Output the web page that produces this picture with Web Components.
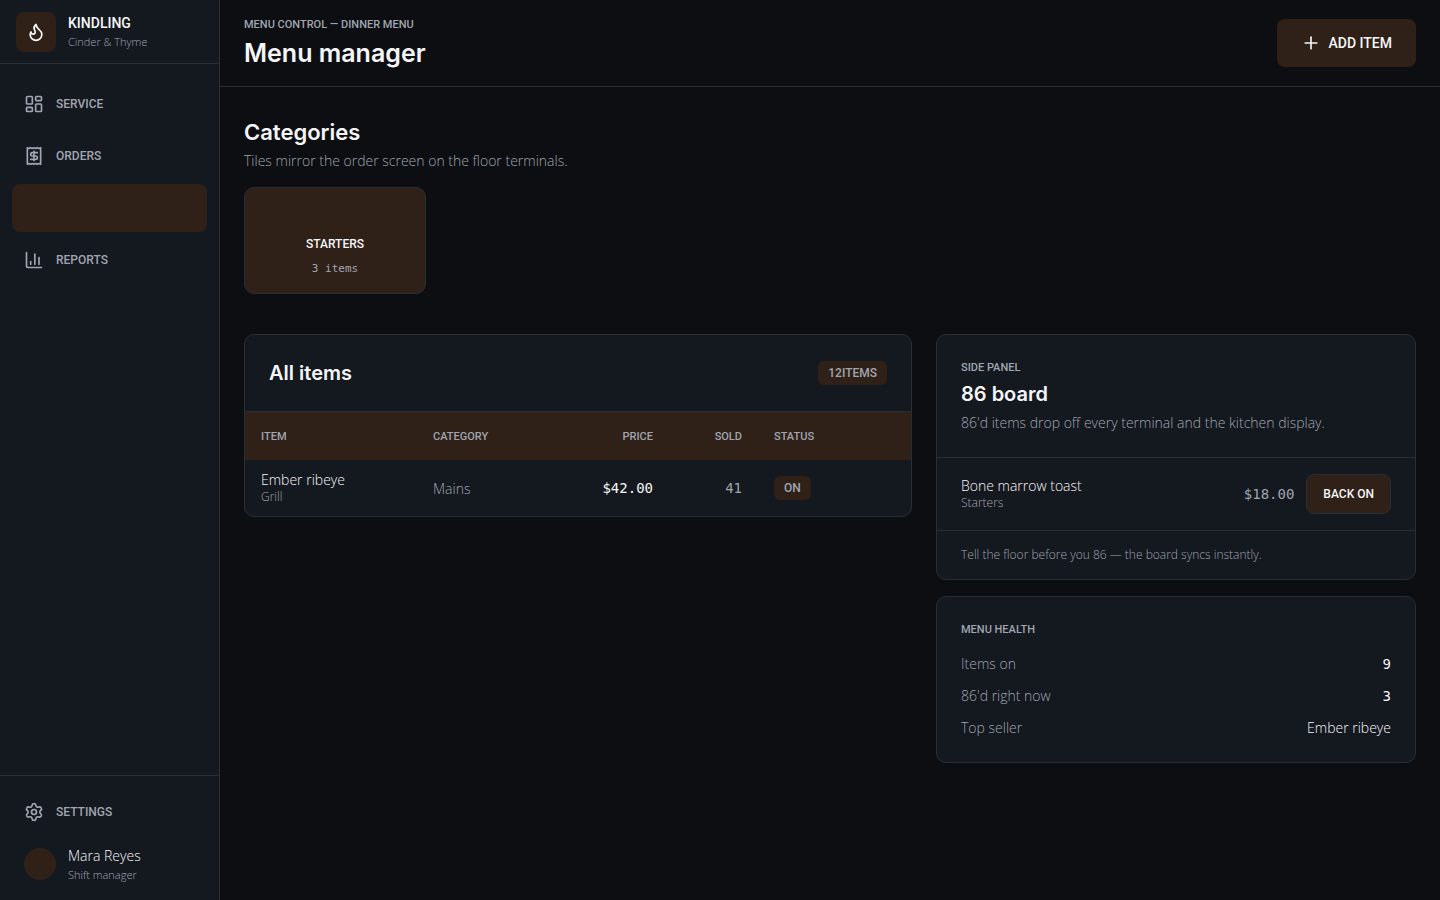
<!DOCTYPE html>
<html lang="en">
<head>
<meta charset="utf-8">
<meta name="viewport" content="width=device-width, initial-scale=1">
<title>Kindling — Menu manager</title>
<style>
  :root {
    --bg: #0c0e12;
    --surface: #14181f;
    --line: #2a2e35;
    --ember: #2f2118;
    --text: #f6f6f8;
    --muted: #a0a5b0;
    --display: Inter, sans-serif;
    --label: Roboto, sans-serif;
    --body: "Open Sans", sans-serif;
    --mono: "DejaVu Sans Mono", monospace;
  }
  body {
    margin: 0;
    background: var(--bg);
    color: var(--text);
    font: 300 14px/21px var(--body);
  }
</style>
</head>
<body>
<menu-app>
  <app-sidebar slot="sidebar">
    <nav-link icon="service">SERVICE</nav-link>
    <nav-link icon="orders">ORDERS</nav-link>
    <nav-link current label="Menu"></nav-link>
    <nav-link icon="reports">REPORTS</nav-link>
    <nav-link slot="foot" icon="settings">SETTINGS</nav-link>
    <user-badge slot="foot"><span>Mara Reyes</span><span slot="role">Shift manager</span></user-badge>
  </app-sidebar>
  <page-header slot="header">
    <span slot="eyebrow">MENU CONTROL — DINNER MENU</span>
    Menu manager
    <add-button slot="action">ADD ITEM</add-button>
  </page-header>
  <category-section>
    <category-tile>STARTERS<span slot="count">3 items</span></category-tile>
  </category-section>
  <content-columns>
    <items-card></items-card>
    <eighty-six-board slot="side"></eighty-six-board>
    <menu-health slot="side"></menu-health>
  </content-columns>
</menu-app>

<script>
const base = `
  *, *::before { box-sizing: border-box; }
  h1, h2, p, dl, dd, dt { margin: 0; }
  h1, h2 { font-family: var(--display); font-weight: 600; }
  .eyebrow { font: 500 11px/17px var(--label); color: var(--muted); }
  button { font: inherit; color: inherit; cursor: pointer; }
  svg { display: block; fill: none; stroke: currentColor; stroke-width: 2; stroke-linecap: round; stroke-linejoin: round; }
`;
const icons = {
  service: '<rect width="7" height="9" x="3" y="3" rx="1"/><rect width="7" height="5" x="14" y="3" rx="1"/><rect width="7" height="9" x="14" y="12" rx="1"/><rect width="7" height="5" x="3" y="16" rx="1"/>',
  orders: '<path d="M4 2v20l2-1 2 1 2-1 2 1 2-1 2 1 2-1 2 1V2l-2 1-2-1-2 1-2-1-2 1-2-1-2 1Z"/><path d="M16 8h-6a2 2 0 1 0 0 4h4a2 2 0 1 1 0 4H8"/><path d="M12 17.5v-11"/>',
  reports: '<path d="M3 3v16a2 2 0 0 0 2 2h16"/><path d="M18 17V9"/><path d="M13 17V5"/><path d="M8 17v-3"/>',
  settings: '<path d="M9.671 4.136a2.34 2.34 0 0 1 4.659 0 2.34 2.34 0 0 0 3.319 1.915 2.34 2.34 0 0 1 2.33 4.033 2.34 2.34 0 0 0 0 3.831 2.34 2.34 0 0 1-2.33 4.033 2.34 2.34 0 0 0-3.319 1.915 2.34 2.34 0 0 1-4.659 0 2.34 2.34 0 0 0-3.32-1.915 2.34 2.34 0 0 1-2.33-4.033 2.34 2.34 0 0 0 0-3.831A2.34 2.34 0 0 1 6.35 6.051a2.34 2.34 0 0 0 3.319-1.915"/><circle cx="12" cy="12" r="3"/>',
  flame: '<path d="M8.5 14.5A2.5 2.5 0 0 0 11 12c0-1.38-.5-2-1-3-1.072-2.143-.224-4.054 2-6 .5 2.5 2 4.9 4 6.5 2 1.6 3 3.5 3 5.5a7 7 0 1 1-14 0c0-1.153.433-2.294 1-3a2.5 2.5 0 0 0 2.5 2.5z"/>',
  plus: '<path d="M5 12h14"/><path d="M12 5v14"/>'
};
const icon = (name, size = 20) =>
  `<svg width="${size}" height="${size}" viewBox="0 0 24 24" aria-hidden="true">${icons[name] || ''}</svg>`;

function define(tag, css, html) {
  customElements.define(tag, class extends HTMLElement {
    constructor() {
      super();
      this.attachShadow({ mode: 'open' });
    }
    connectedCallback() {
      const markup = typeof html === 'function' ? html(this) : html;
      this.shadowRoot.innerHTML = `<style>${base}${css}</style>${markup}`;
    }
  });
}

define('menu-app', `
  :host { display: grid; grid-template-columns: 220px minmax(0, 1fr); min-height: 100vh; }
  .page { display: flex; flex-direction: column; }
  main { display: flex; flex-direction: column; gap: 40px; padding: 32px 24px; }
`, `<slot name="sidebar"></slot>
    <div class="page"><slot name="header"></slot><main><slot></slot></main></div>`);

define('app-sidebar', `
  :host { display: flex; flex-direction: column; background: var(--surface); border-right: 1px solid var(--line); }
  header { display: flex; align-items: center; gap: 12px; height: 64px; padding: 0 16px; border-bottom: 1px solid var(--line); }
  .mark { display: grid; place-items: center; width: 40px; height: 40px; border-radius: 8px; background: var(--ember); }
  .name { font: 500 14px/21px var(--label); }
  .place { font-size: 11px; line-height: 16px; color: var(--muted); }
  nav { flex: 1; display: flex; flex-direction: column; gap: 4px; padding: 16px 12px; }
  footer { display: flex; flex-direction: column; gap: 4px; padding: 12px; border-top: 1px solid var(--line); }
`, `<header>
      <div class="mark">${icon('flame')}</div>
      <div><div class="name">KINDLING</div><div class="place">Cinder &amp; Thyme</div></div>
    </header>
    <nav aria-label="Main"><slot></slot></nav>
    <footer><slot name="foot"></slot></footer>`);

define('nav-link', `
  :host { display: block; }
  a { display: flex; align-items: center; gap: 12px; height: 48px; padding: 0 12px; border-radius: 8px;
      font: 500 12px/16px var(--label); color: var(--muted); text-decoration: none; }
  a[aria-current] { background: var(--ember); }
`, el => el.hasAttribute('current')
  ? `<a href="#" aria-current="page" aria-label="${el.getAttribute('label')}"></a>`
  : `<a href="#">${icon(el.getAttribute('icon'))}<slot></slot></a>`);

define('user-badge', `
  :host { display: flex; align-items: center; gap: 12px; height: 48px; padding: 0 12px; }
  .avatar { width: 32px; height: 32px; border-radius: 50%; background: var(--ember); }
  .who { line-height: 20px; }
  .role { font-size: 11px; line-height: 17px; color: var(--muted); }
`, `<div class="avatar"></div><div class="who"><slot></slot><div class="role"><slot name="role"></slot></div></div>`);

define('page-header', `
  :host { display: flex; align-items: center; justify-content: space-between; padding: 16px 24px; border-bottom: 1px solid var(--line); }
  h1 { margin-top: 4px; font-size: 25px; line-height: 33px; }
`, `<div><div class="eyebrow"><slot name="eyebrow"></slot></div><h1><slot></slot></h1></div><slot name="action"></slot>`);

define('add-button', `
  :host { display: block; }
  button { display: flex; align-items: center; gap: 8px; height: 48px; padding: 0 24px; border: 0; border-radius: 8px;
      background: var(--ember); font: 500 14px/20px var(--label); }
`, `<button type="button">${icon('plus')}<slot></slot></button>`);

define('category-section', `
  :host { display: block; }
  h2 { font-size: 22px; line-height: 27px; }
  p { margin-top: 4px; color: var(--muted); }
  .tiles { display: grid; grid-template-columns: repeat(6, minmax(0, 1fr)); gap: 16px; margin-top: 16px; }
`, `<h2>Categories</h2><p>Tiles mirror the order screen on the floor terminals.</p><div class="tiles"><slot></slot></div>`);

define('category-tile', `
  :host { display: block; }
  button { display: flex; flex-direction: column; align-items: center; gap: 8px; width: 100%; padding: 16px;
      border: 1px solid var(--line); border-radius: 10px; background: var(--ember); font: 500 12px/16px var(--label); }
  .icon { width: 24px; height: 24px; }
  .count { font: 400 11px/17px var(--mono); color: var(--muted); }
`, `<button type="button"><span class="icon"></span><span><slot></slot></span><span class="count"><slot name="count"></slot></span></button>`);

define('content-columns', `
  :host { display: grid; grid-template-columns: minmax(0, 1fr) 480px; align-items: start; gap: 24px; }
  aside { display: flex; flex-direction: column; gap: 16px; }
`, `<slot></slot><aside><slot name="side"></slot></aside>`);

define('panel-card', `
  :host { display: block; overflow: hidden; border: 1px solid var(--line); border-radius: 10px; background: var(--surface); }
`, `<slot></slot>`);

define('status-pill', `
  :host { display: inline-block; padding: 4px 10px; border-radius: 6px; background: var(--ember);
      font: 500 12px/16px var(--label); color: var(--muted); vertical-align: middle; }
`, `<slot></slot>`);

define('items-card', `
  :host { display: block; }
  .head { display: flex; align-items: center; justify-content: space-between; padding: 24px; }
  h2 { font-size: 20px; line-height: 28px; }
  table { width: 100%; table-layout: fixed; border-collapse: separate; border-spacing: 0; border-top: 1px solid var(--line); text-align: left; }
  th { height: 48px; padding: 0 16px; background: var(--ember);
      font: 500 11px/17px var(--label); color: var(--muted); }
  td { height: 56px; padding: 0 16px; }
  .w-item { width: 172px; } .w-category { width: 140px; } .w-price { width: 112px; } .w-sold { width: 89px; } .w-status { width: 153px; }
  .num { text-align: right; }
  td.num { font-family: var(--mono); font-weight: 400; }
  .muted { color: var(--muted); }
  .name { line-height: 18px; }
  .station { font-size: 12px; line-height: 16px; color: var(--muted); }
`, `<panel-card>
      <div class="head"><h2>All items</h2><status-pill>12ITEMS</status-pill></div>
      <table>
        <colgroup><col class="w-item"><col class="w-category"><col class="w-price"><col class="w-sold"><col class="w-status"></colgroup>
        <thead><tr><th scope="col">ITEM</th><th scope="col">CATEGORY</th><th scope="col" class="num">PRICE</th><th scope="col" class="num">SOLD</th><th scope="col">STATUS</th></tr></thead>
        <tbody><tr>
          <td><div class="name">Ember ribeye</div><div class="station">Grill</div></td>
          <td class="muted">Mains</td><td class="num">$42.00</td><td class="num muted">41</td>
          <td><status-pill>ON</status-pill></td>
        </tr></tbody>
      </table>
    </panel-card>`);

define('eighty-six-board', `
  :host { display: block; }
  .head { padding: 24px; }
  h2 { margin: 4px 0; font-size: 20px; line-height: 28px; }
  p, .from, .price { color: var(--muted); }
  .row { display: flex; align-items: center; gap: 12px; padding: 16px 24px; border-top: 1px solid var(--line); }
  .dish { flex: 1; }
  .name { line-height: 18px; }
  .from { font-size: 12px; line-height: 16px; }
  .price { font-family: var(--mono); font-weight: 400; }
  button { height: 40px; padding: 0 16px; border: 1px solid var(--line); border-radius: 8px; background: var(--ember); font: 500 12px/16px var(--label); }
  .note { padding: 16px 24px; border-top: 1px solid var(--line); font-size: 12px; line-height: 16px; }
`, `<panel-card>
      <div class="head"><div class="eyebrow">SIDE PANEL</div><h2>86 board</h2>
        <p>86'd items drop off every terminal and the kitchen display.</p></div>
      <div class="row">
        <div class="dish"><div class="name">Bone marrow toast</div><div class="from">Starters</div></div>
        <span class="price">$18.00</span><button type="button">BACK ON</button>
      </div>
      <p class="note">Tell the floor before you 86 — the board syncs instantly.</p>
    </panel-card>`);

define('menu-health', `
  :host { display: block; }
  .body { padding: 24px; }
  dl { display: flex; flex-direction: column; gap: 12px; margin-top: 16px; line-height: 20px; }
  dl div { display: flex; justify-content: space-between; }
  dt { color: var(--muted); }
  .num { font-family: var(--mono); font-weight: 400; }
`, `<panel-card><div class="body">
      <div class="eyebrow">MENU HEALTH</div>
      <dl>
        <div><dt>Items on</dt><dd class="num">9</dd></div>
        <div><dt>86'd right now</dt><dd class="num">3</dd></div>
        <div><dt>Top seller</dt><dd>Ember ribeye</dd></div>
      </dl>
    </div></panel-card>`);
</script>
</body>
</html>
